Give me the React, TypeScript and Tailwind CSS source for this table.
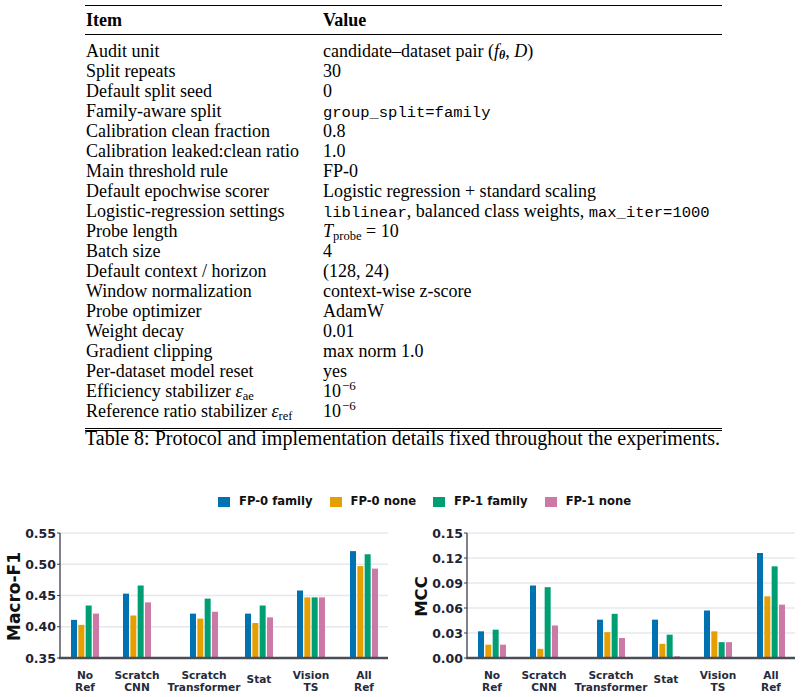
import React from 'react'

const serif = "font-['Liberation_Serif','Times_New_Roman',serif]"
const mono = "font-['Liberation_Mono','DejaVu_Sans_Mono',monospace]"

const Sub = ({ children }: { children: React.ReactNode }) => (
  <sub className="text-[12.5px] leading-none not-italic relative top-[3px] align-baseline">{children}</sub>
)

const Sup = ({ children }: { children: React.ReactNode }) => (
  <sup className="text-[13px] leading-none relative -top-[7px] align-baseline ml-[1px]">{children}</sup>
)

const rows: [React.ReactNode, React.ReactNode][] = [
  [
    'Audit unit',
    <>
      candidate–dataset pair (<i>f</i>
      <sub className="text-[12px] leading-none font-bold italic relative top-[2px] align-baseline">θ</sub>, <i>D</i>)
    </>,
  ],
  ['Split repeats', '30'],
  ['Default split seed', '0'],
  ['Family-aware split', <span className={`${mono} text-[15.5px]`}>group_split=family</span>],
  ['Calibration clean fraction', '0.8'],
  ['Calibration leaked:clean ratio', '1.0'],
  ['Main threshold rule', 'FP-0'],
  ['Default epochwise scorer', 'Logistic regression + standard scaling'],
  [
    'Logistic-regression settings',
    <>
      <span className={`${mono} text-[15.5px]`}>liblinear</span>, balanced class weights,{' '}
      <span className={`${mono} text-[15.5px]`}>max_iter=1000</span>
    </>,
  ],
  [
    'Probe length',
    <>
      <i>T</i>
      <Sub>probe</Sub> = 10
    </>,
  ],
  ['Batch size', '4'],
  ['Default context / horizon', '(128, 24)'],
  ['Window normalization', 'context-wise z-score'],
  ['Probe optimizer', 'AdamW'],
  ['Weight decay', '0.01'],
  ['Gradient clipping', 'max norm 1.0'],
  ['Per-dataset model reset', 'yes'],
  [
    <>
      Efficiency stabilizer <i>ε</i>
      <Sub>ae</Sub>
    </>,
    <>
      10<Sup>−6</Sup>
    </>,
  ],
  [
    <>
      Reference ratio stabilizer <i>ε</i>
      <Sub>ref</Sub>
    </>,
    <>
      10<Sup>−6</Sup>
    </>,
  ],
]

const COLORS = ['#0072b2', '#e69f00', '#009e73', '#cc79a7']
const LEGEND = ['FP-0 family', 'FP-0 none', 'FP-1 family', 'FP-1 none']
const GROUPS: [string, string][] = [
  ['No', 'Ref'],
  ['Scratch', 'CNN'],
  ['Scratch', 'Transformer'],
  ['Stat', ''],
  ['Vision', 'TS'],
  ['All', 'Ref'],
]
const GROUP_X = [11, 63, 130, 185, 237, 290]

type ChartProps = {
  axisX: number
  label: string
  ticks: string[]
  min: number
  max: number
  data: number[][]
}

function BarChart({ axisX, label, ticks, min, max, data }: ChartProps) {
  const top = 13
  const bottom = 138
  const right = axisX + 328
  const yOf = (v: number) => bottom - ((v - min) / (max - min)) * (bottom - top)
  const font = { fontFamily: 'DejaVu Sans, Verdana, sans-serif', fontWeight: 700 }
  return (
    <svg width={401} height={177} className="block shrink-0">
      {ticks.map((t, i) => {
        const y = bottom - (i * (bottom - top)) / (ticks.length - 1)
        return (
          <g key={t}>
            {i > 0 && <line x1={axisX} x2={right} y1={y} y2={y} stroke="#e6e8ee" strokeWidth={1.6} />}
            <line x1={axisX - 3} x2={axisX} y1={y} y2={y} stroke="#3a3f4b" strokeWidth={1} />
            <text x={axisX - 4} y={y} textAnchor="end" dominantBaseline="central" fontSize={12.5} fill="#1e2335" style={font}>
              {t}
            </text>
          </g>
        )
      })}
      <text
        transform={`translate(${axisX - 46} ${(top + bottom) / 2 + 1}) rotate(-90)`}
        textAnchor="middle"
        dominantBaseline="central"
        fontSize={label === 'MCC' ? 16.5 : 17}
        fill="#111"
        style={font}
      >
        {label}
      </text>
      {data.map((g, gi) =>
        g.map((v, bi) => {
          const x = axisX + GROUP_X[gi] + bi * 7.33
          const y = yOf(v)
          return <rect key={`${gi}-${bi}`} x={x} y={y} width={6} height={bottom - y} fill={COLORS[bi]} />
        })
      )}
      <line x1={axisX} x2={axisX} y1={top} y2={bottom} stroke="#3a3f4b" strokeWidth={1.3} />
      <line x1={axisX - 1} x2={right} y1={bottom} y2={bottom} stroke="#4a4d55" strokeWidth={2.4} />
      {GROUPS.map(([a, b], gi) => {
        const cx = axisX + GROUP_X[gi] + 14
        return b ? (
          <g key={gi}>
            <text x={cx} y={155} textAnchor="middle" dominantBaseline="central" fontSize={10.6} fill="#262b3b" style={font}>
              {a}
            </text>
            <text x={cx} y={166.5} textAnchor="middle" dominantBaseline="central" fontSize={10.6} fill="#262b3b" style={font}>
              {b}
            </text>
          </g>
        ) : (
          <text key={gi} x={cx} y={158.5} textAnchor="middle" dominantBaseline="central" fontSize={10.6} fill="#262b3b" style={font}>
            {a}
          </text>
        )
      })}
    </svg>
  )
}

export default function App() {
  return (
    <main className="w-[803px] h-[697px] bg-white text-black overflow-hidden">
      {/* Table */}
      <div className={`${serif} text-[18px] ml-[85px] w-[637px] pt-[5px]`}>
        <div className="border-t-[1.5px] border-black" />
        <div className="grid grid-cols-[237px_1fr] h-[28px] items-center font-bold pl-[1px] pt-[1px]">
          <div>Item</div>
          <div>Value</div>
        </div>
        <div className="border-t border-black" />
        <div className="pt-[6px] pb-[7px]">
          {rows.map(([k, v], i) => (
            <div key={i} className="grid grid-cols-[237px_1fr] h-[20px] leading-[20px] pl-[1px] whitespace-nowrap">
              <div>{k}</div>
              <div>{v}</div>
            </div>
          ))}
        </div>
        <div className="border-t-[1.5px] border-black" />
        <div className="border-t-[0.5px] border-black mt-[1px]" />
      </div>
      <div className={`${serif} text-[20px] leading-[16px] text-center -mt-[1px] pl-[2px] whitespace-nowrap`}>
        Table 8: Protocol and implementation details fixed throughout the experiments.
      </div>

      {/* Legend */}
      <div className="flex items-center ml-[218px] mt-[46px] h-[20px] font-['DejaVu_Sans',sans-serif] font-bold text-[11.6px] text-[#111]">
        {LEGEND.map((l, i) => (
          <div key={l} className="flex items-center mr-[17px]">
            <span className="w-[12px] h-[10px] mr-[9px]" style={{ backgroundColor: COLORS[i] }} />
            <span>{l}</span>
          </div>
        ))}
      </div>

      {/* Charts */}
      <div className="flex mt-[8px]">
        <BarChart
          axisX={60}
          label="Macro-F1"
          ticks={['0.35', '0.40', '0.45', '0.50', '0.55']}
          min={0.35}
          max={0.55}
          data={[
            [0.411, 0.403, 0.434, 0.421],
            [0.453, 0.418, 0.466, 0.439],
            [0.421, 0.413, 0.445, 0.424],
            [0.421, 0.406, 0.434, 0.415],
            [0.458, 0.447, 0.447, 0.447],
            [0.521, 0.497, 0.516, 0.493],
          ]}
        />
        <BarChart
          axisX={66}
          label="MCC"
          ticks={['0.00', '0.03', '0.06', '0.09', '0.12', '0.15']}
          min={0}
          max={0.15}
          data={[
            [0.032, 0.016, 0.034, 0.016],
            [0.087, 0.011, 0.085, 0.039],
            [0.046, 0.031, 0.053, 0.024],
            [0.046, 0.017, 0.028, 0.002],
            [0.057, 0.032, 0.019, 0.019],
            [0.126, 0.074, 0.11, 0.064],
          ]}
        />
      </div>
    </main>
  )
}
